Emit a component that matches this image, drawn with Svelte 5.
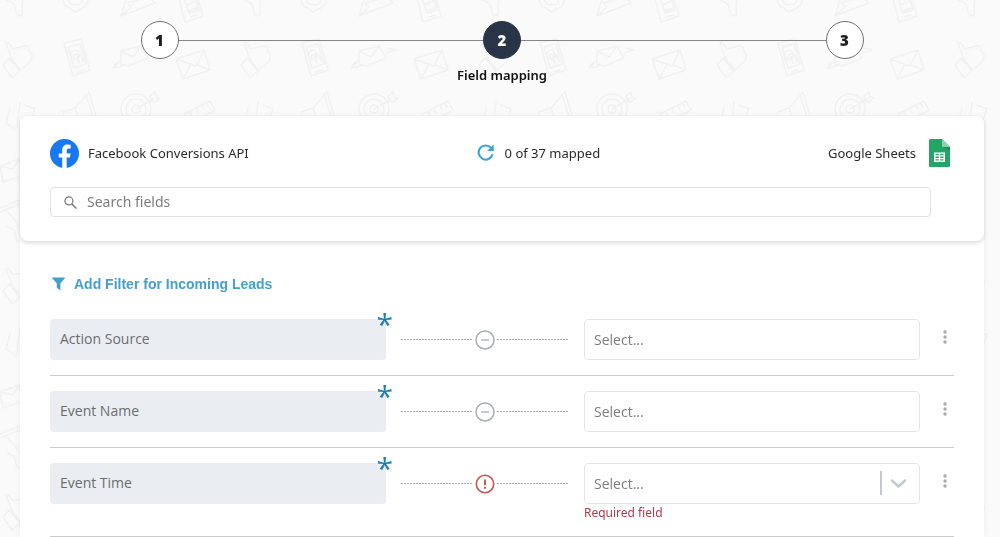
<script>
  const steps = [
    { number: 1, label: '' },
    { number: 2, label: 'Field mapping', current: true },
    { number: 3, label: '' }
  ];
  const rows = [
    { id: 'action-source', name: 'Action Source' },
    { id: 'event-name', name: 'Event Name' },
    { id: 'event-time', name: 'Event Time', error: 'Required field' }
  ];
  let query = $state('');
</script>

<svg class="backdrop" aria-hidden="true">
  <defs>
    <pattern id="doodles" width="238" height="226" patternUnits="userSpaceOnUse">
      <g fill="none" stroke="#f1f1f1" stroke-width="1.5" stroke-linejoin="round" stroke-linecap="round">
        <!-- thumbs up -->
        <path d="M6 42c3 0 5 4 7 7l11-3c4-1 6 2 5 5 4 2 4 8 1 11l-9 8-7-8-3-5c-1-5-5-12-5-15zM9 58l-6 7 9 13 8-7z" />
        <!-- phone -->
        <path d="M64 43l17-4 9 31-17 6zM68 47l12-3 6 20-12 4zM78 72l6-2M71 57c-2-5 4-9 7-5 3 5-1 9-4 7-2-3 1-6 3-4M79 63l-2-6 4-2 2 6" />
        <!-- winged letter -->
        <path d="M121 51l20-5 7 12-20 8-7-2zM121 51l12 6 8-11M121 60l-8 8 10-2M148 53l10-3-8-2M113 68l4-6" />
        <!-- envelope -->
        <path d="M176 59l28-9 6 20-27 9zM176 59l20 7 8-16M183 79l8-15M210 70l-13-5" />
        <!-- wrench -->
        <path d="M5-1l9 5c2 5 1 9 4 12l4-1c1-5-1-8 1-16" />
        <!-- badge -->
        <path d="M63-2c0 6 3 9 7 10l5 4 6-3c5-2 8-6 7-12M68-1c2 8 14 8 15 0" />
        <!-- paper plane -->
        <path d="M126-1l-5 17 34-13-7-7M121 16l10-9-4-4 28-8" />
        <!-- phone, upper row -->
        <path d="M178-6l7 28 18-6-7-24M184-2l5 15 10-3-4-14M191 17l6-2M187 5l8-4M189 11l8-3" />
        <!-- angle brackets -->
        <path d="M10 108l-4 15 9 6M20 102l-3 25M25 105l10 4-6 16" />
        <!-- megaphone -->
        <path d="M63 112l12-4 14-16 9 31-16-2-17 6zM75 108l6 18M86 95l9 28M67 122l4 12 6-2" />
        <!-- target -->
        <circle cx="136" cy="109" r="15" />
        <circle cx="136" cy="109" r="10" />
        <circle cx="136" cy="109" r="4" />
        <path d="M136 109l17-10M151 101l-1-5 5-4 1 5 4 1-5 4z" />
        <!-- ruler -->
        <path d="M184 114l26-13 5 9-26 14zM190 112l2 4M196 109l2 4M202 106l2 4M207 104l2 3" />
        <!-- small letter -->
        <path d="M0 166l19-7 5 16-21 7zM0 166l13 3 6-10" />
        <!-- folded map -->
        <path d="M0 208l22-9M0 212l20-8M6 210l10 11 4 8" />
      </g>
    </pattern>
  </defs>
  <rect width="100%" height="100%" fill="url(#doodles)" />
</svg>

<main class="page">
  <ol class="steps">
    {#each steps as step}
      <li class:current={step.current}>
        <span class="bubble">{step.number}</span>
        {#if step.label}<span class="caption">{step.label}</span>{/if}
      </li>
    {/each}
  </ol>

  <section class="panel">
    <header class="card">
      <div class="apps">
        <div class="app">
          <svg width="29" height="29" viewBox="0 0 29 29" aria-hidden="true">
            <circle cx="14.500" cy="14.500" r="14.500" fill="#1877f2" />
            <path fill="#fff" d="M12.200 29V18.600H8.700v-4.200h3.500v-3.200c0-3.700 2.100-5.600 5.400-5.600 1.500 0 3.100.3 3.100.3v3.500h-1.800c-1.700 0-2.200 1-2.200 2.100v2.900h3.900l-.7 4.200h-3.200V29z" />
          </svg>
          <span>Facebook Conversions API</span>
        </div>
        <div class="progress">
          <button class="bare" aria-label="Refresh fields">
            <svg width="17" height="19" viewBox="0 0 16 18" aria-hidden="true">
              <path d="M13.300 3.700A6.700 6.700 0 1 0 14.700 9.800" fill="none" stroke="#3fa2d4" stroke-width="2" />
              <path d="M15.800.4v6.200H9.500z" fill="#3fa2d4" />
            </svg>
          </button>
          <span>0 of 37 mapped</span>
        </div>
        <div class="app target">
          <span>Google Sheets</span>
          <svg width="21" height="28" viewBox="0 0 21 28" aria-hidden="true">
            <path fill="#23a566" d="M1.500 0H13l8 8v18.500a1.500 1.500 0 0 1-1.500 1.500h-18A1.500 1.500 0 0 1 0 26.500v-25A1.500 1.500 0 0 1 1.500 0z" />
            <path fill="#1c8f57" d="M14 7.500l7 5V8z" />
            <path fill="#8ed1b1" d="M13 0l8 8h-6.500A1.500 1.500 0 0 1 13 6.500z" />
            <path fill="#fff" fill-rule="evenodd" d="M5 13.500h11v9.500H5zM6.500 15v1.300h3.300V15zm4.700 0v1.300h3.300V15zM6.500 17.600v1.300h3.300v-1.300zm4.700 0v1.300h3.300v-1.300zM6.500 20.200v1.400h3.300v-1.400zm4.700 0v1.400h3.300v-1.400z" />
          </svg>
        </div>
      </div>
      <label class="search">
        <svg width="13" height="13" viewBox="0 0 13 13" fill="none" stroke="#777" stroke-width="1.200" aria-hidden="true">
          <circle cx="4.900" cy="4.900" r="4" />
          <path d="M7.900 7.900l4.500 4.500" stroke-width="1.400" />
        </svg>
        <input type="text" placeholder="Search fields" aria-label="Search fields" bind:value={query} />
      </label>
    </header>

    <div class="body">
      <button class="bare filter">
        <svg width="13" height="14" viewBox="0 0 12 13" aria-hidden="true">
          <path fill="#459fcb" d="M.4.500h11.200q.5.500.1 1L7.800 5.800v6.700L4.400 10V5.800L.3 1.500Q-.1 1 .4.500z" />
        </svg>
        <span>Add Filter for Incoming Leads</span>
      </button>

      {#each rows as row}
        <div class="row">
          <label class="field" for={row.id}>
            {row.name}
            <span class="required" aria-hidden="true">*</span>
          </label>
          <div class="link">
            <i></i>
            {#if row.error}
              <svg width="20" height="20" viewBox="0 0 20 20" fill="none" stroke="#c9564c" stroke-width="1.600" aria-hidden="true">
                <circle cx="10" cy="10" r="8.700" />
                <path d="M10 5.400v5.900M10 12.700v2" stroke-width="1.900" />
              </svg>
            {:else}
              <svg width="20" height="20" viewBox="0 0 20 20" fill="none" stroke="#a9adb2" stroke-width="1.500" aria-hidden="true">
                <circle cx="10" cy="10" r="9" />
                <path d="M6 10h8" stroke-width="1.300" />
              </svg>
            {/if}
            <i></i>
          </div>
          <div class="value">
            <div class="picker">
              <select id={row.id}>
                <option>Select...</option>
              </select>
              {#if row.error}
                <svg class="chevron" width="30" height="24" viewBox="0 0 30 24" fill="none" stroke="#c4c8cc" aria-hidden="true">
                  <path d="M1 0v24" stroke-width="2" />
                  <path d="M12 9.500l6.500 6 6.500-6" stroke-width="2.400" stroke-linecap="round" />
                </svg>
              {/if}
            </div>
            {#if row.error}<p class="error">{row.error}</p>{/if}
          </div>
          <button class="bare more" aria-label="Options for {row.name}">
            <svg width="4" height="14" viewBox="0 0 4 14" fill="#a9a9a9" aria-hidden="true">
              <circle cx="2" cy="2" r="1.700" /><circle cx="2" cy="7" r="1.700" /><circle cx="2" cy="12" r="1.700" />
            </svg>
          </button>
        </div>
      {/each}
    </div>
  </section>
</main>

<style>
  :global(body) {
    background: #fafafa;
  }
  * {
    box-sizing: border-box;
  }
  .backdrop {
    position: fixed;
    inset: 0;
    width: 100%;
    height: 100%;
    z-index: -1;
  }
  .page {
    height: 100vh;
    overflow: hidden;
    padding: 21px 16px 0 20px;
    display: flex;
    flex-direction: column;
    font-family: 'Noto Sans', 'Open Sans', sans-serif;
    font-size: 13px;
    line-height: 20px;
    color: #2b2b2b;
  }
  .steps {
    list-style: none;
    margin: 0 auto;
    padding: 0;
    width: 75%;
    height: 95px;
    flex: none;
    display: flex;
    justify-content: space-between;
    background: linear-gradient(#84868a, #84868a) 0 19px / 100% 1px no-repeat;
  }
  .steps li {
    width: 38px;
    display: flex;
    flex-direction: column;
    align-items: center;
    gap: 6px;
  }
  .bubble {
    flex: none;
    width: 38px;
    height: 38px;
    border: 1px solid #6d6f73;
    border-radius: 50%;
    background: #fff;
    display: grid;
    place-items: center;
    font-family: 'Open Sans', sans-serif;
    font-size: 15px;
    font-weight: 800;
    color: #1d1d1d;
  }
  .current .bubble {
    background: #283548;
    border-color: #283548;
    color: #fff;
  }
  .caption {
    white-space: nowrap;
    font-weight: 600;
    color: #111;
  }
  .panel {
    flex: none;
    min-height: calc(100vh - 116px);
    background: #fff;
    border-radius: 8px 8px 0 0;
    box-shadow: 0 0 6px rgba(0, 0, 0, 0.06);
  }
  .card {
    padding: 22px 30px 24px;
    border-radius: 8px;
    background: #fff;
    box-shadow: 0 2px 4px rgba(0, 0, 0, 0.14);
  }
  .apps {
    display: flex;
    justify-content: space-between;
    align-items: center;
    height: 30px;
    margin-right: 4px;
  }
  .app,
  .progress {
    flex: none;
    display: flex;
    align-items: center;
    gap: 9px;
  }
  .progress {
    gap: 11px;
  }
  .target {
    gap: 13px;
  }
  .bare {
    display: flex;
    border: 0;
    padding: 0;
    background: none;
    font: inherit;
    cursor: pointer;
  }
  .search {
    display: flex;
    align-items: center;
    gap: 10px;
    height: 30px;
    margin: 19px 23px 0 0;
    padding: 0 13px;
    border: 1px solid #e0e1e3;
    border-radius: 4px;
  }
  .search input {
    flex: 1;
    min-width: 0;
    border: 0;
    padding: 0;
    outline: 0;
    background: none;
    font: inherit;
    font-size: 14px;
    color: #333;
  }
  .search input::placeholder {
    color: #7d7d7d;
  }
  .body {
    padding: 33px 30px 0;
  }
  .filter {
    align-items: center;
    gap: 9px;
    margin: 0 0 10px 2px;
    font-family: 'Liberation Sans', Arial, sans-serif;
    font-size: 14px;
    font-weight: 700;
    line-height: 20px;
    color: #459fcb;
  }
  .row {
    display: grid;
    grid-template-columns: 2fr 1fr 2fr 19px;
    column-gap: 15px;
    align-items: start;
    padding: 15px 0;
    border-bottom: 1px solid #cbcbcb;
  }
  .field {
    position: relative;
    height: 41px;
    padding: 10px;
    border-radius: 4px;
    background: #eaedf2;
    font-family: 'Open Sans', sans-serif;
    font-size: 14px;
    color: #6d6d6d;
  }
  .required {
    position: absolute;
    top: -11px;
    right: -7px;
    font-size: 30px;
    line-height: 32px;
    color: #1d7db5;
  }
  .link {
    height: 41px;
    display: flex;
    align-items: center;
    gap: 2px;
  }
  .link i {
    flex: 1;
    height: 1px;
    background: repeating-linear-gradient(90deg, #a8a8a8 0 2px, #fff 2px 3px);
  }
  .picker {
    position: relative;
  }
  select {
    display: block;
    width: 100%;
    height: 41px;
    padding: 0 9px;
    border: 1px solid #e3e4e6;
    border-radius: 4px;
    appearance: none;
    background: #fff;
    font-family: 'Open Sans', sans-serif;
    font-size: 14px;
    color: #7d7d7d;
  }
  .chevron {
    position: absolute;
    right: 10px;
    top: 8px;
    pointer-events: none;
  }
  .error {
    margin: 0;
    font-size: 12px;
    line-height: 17px;
    color: #b23a48;
  }
  .more {
    justify-content: center;
    margin-top: 11px;
  }
</style>
